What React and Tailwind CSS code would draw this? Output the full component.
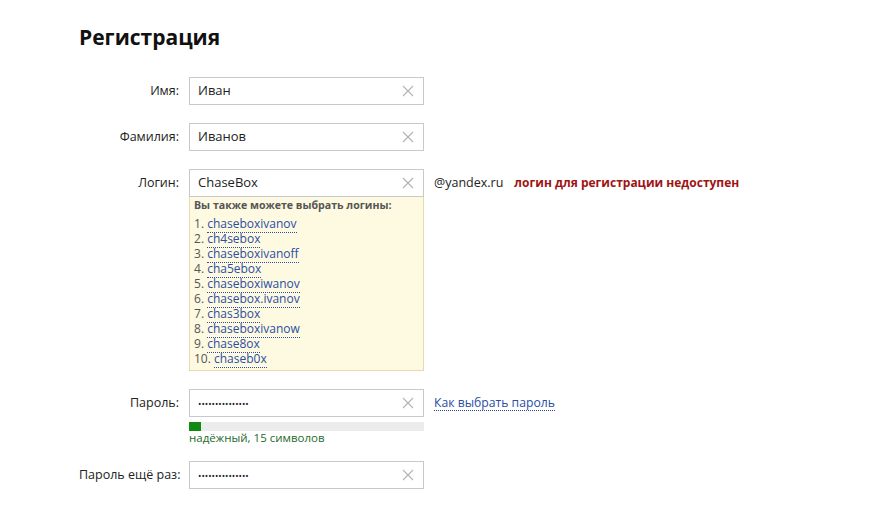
import React from 'react';

const suggestions = [
  'chaseboxivanov',
  'ch4sebox',
  'chaseboxivanoff',
  'cha5ebox',
  'chaseboxiwanov',
  'chasebox.ivanov',
  'chas3box',
  'chaseboxivanow',
  'chase8ox',
  'chaseb0x',
];

const Clear = () => (
  <svg width="12" height="12" viewBox="0 0 12 12" className="shrink-0">
    <path d="M1 1L11 11M11 1L1 11" stroke="#b3b3b3" strokeWidth="1.1" />
  </svg>
);

const Field = ({ value, password }) => (
  <div className="w-[235px] h-[28px] border border-[#c9c9c9] bg-white flex items-center pl-[8px] pr-[9px]">
    {password ? (
      <span className="flex-1 text-[9px] text-[#222] tracking-[0px] leading-none">{value}</span>
    ) : (
      <span className="flex-1 text-[13px] text-[#222]">{value}</span>
    )}
    <Clear />
  </div>
);

const Row = ({ label, children, className = '' }) => (
  <div className={`flex ${className}`}>
    <div className="w-[101px] pr-[1px] text-right text-[12.5px] text-[#222] leading-[28px] shrink-0 whitespace-nowrap">{label}</div>
    <div className="ml-[9px]">{children}</div>
  </div>
);

const App = () => {
  return (
    <div className="w-[888px] h-[514px] bg-white font-['Segoe_UI','Open_Sans',sans-serif] pl-[79px] pt-[21px]">
      <h1 className="text-[21px] font-bold text-[#111] leading-[32px]">Регистрация</h1>

      <Row label="Имя:" className="mt-[24px]">
        <Field value="Иван" />
      </Row>

      <Row label="Фамилия:" className="mt-[18px]">
        <Field value="Иванов" />
      </Row>

      <Row label="Логин:" className="mt-[18px]">
        <div className="flex">
          <div>
            <Field value="ChaseBox" />
            <div className="w-[235px] bg-[#fef9e1] border border-t-0 border-[#e9d9ae] px-[4px] pb-[4px]">
              <div className="text-[10.6px] font-bold text-[#555] leading-[16px] whitespace-nowrap">Вы также можете выбрать логины:</div>
              <ol className="mt-[3px] text-[12px] leading-[15px] text-[#555]">
                {suggestions.map((s, i) => (
                  <li key={s}>
                    {i + 1}.{' '}
                    <span className="text-[#2a4ea3] border-b border-dotted border-[#2a4ea3]">{s}</span>
                  </li>
                ))}
              </ol>
            </div>
          </div>
          <div className="ml-[10px] h-[28px] flex items-center text-[12.5px] whitespace-nowrap">
            <span className="text-[#222]">@yandex.ru</span>
            <span className="ml-[11px] text-[12px] font-bold text-[#a01313]">логин для регистрации недоступен</span>
          </div>
        </div>
      </Row>

      <Row label="Пароль:" className="mt-[18px]">
        <div className="flex">
          <div>
            <Field value="•••••••••••••••" password />
            <div className="mt-[5px] w-[235px] h-[9px] bg-[#ececec]">
              <div className="w-[12px] h-[9px] bg-[#118a11]" />
            </div>
            <div className="text-[11.5px] text-[#1e6b2c] leading-[14px]">надёжный, 15 символов</div>
          </div>
          <div className="ml-[10px] h-[28px] flex items-center text-[12.2px] whitespace-nowrap">
            <span className="text-[#2a4ea3] border-b border-dotted border-[#2a4ea3] leading-[15px]">Как выбрать пароль</span>
          </div>
        </div>
      </Row>

      <Row label="Пароль ещё раз:" className="mt-[16px]">
        <Field value="•••••••••••••••" password />
      </Row>
    </div>
  );
};

export default App;
